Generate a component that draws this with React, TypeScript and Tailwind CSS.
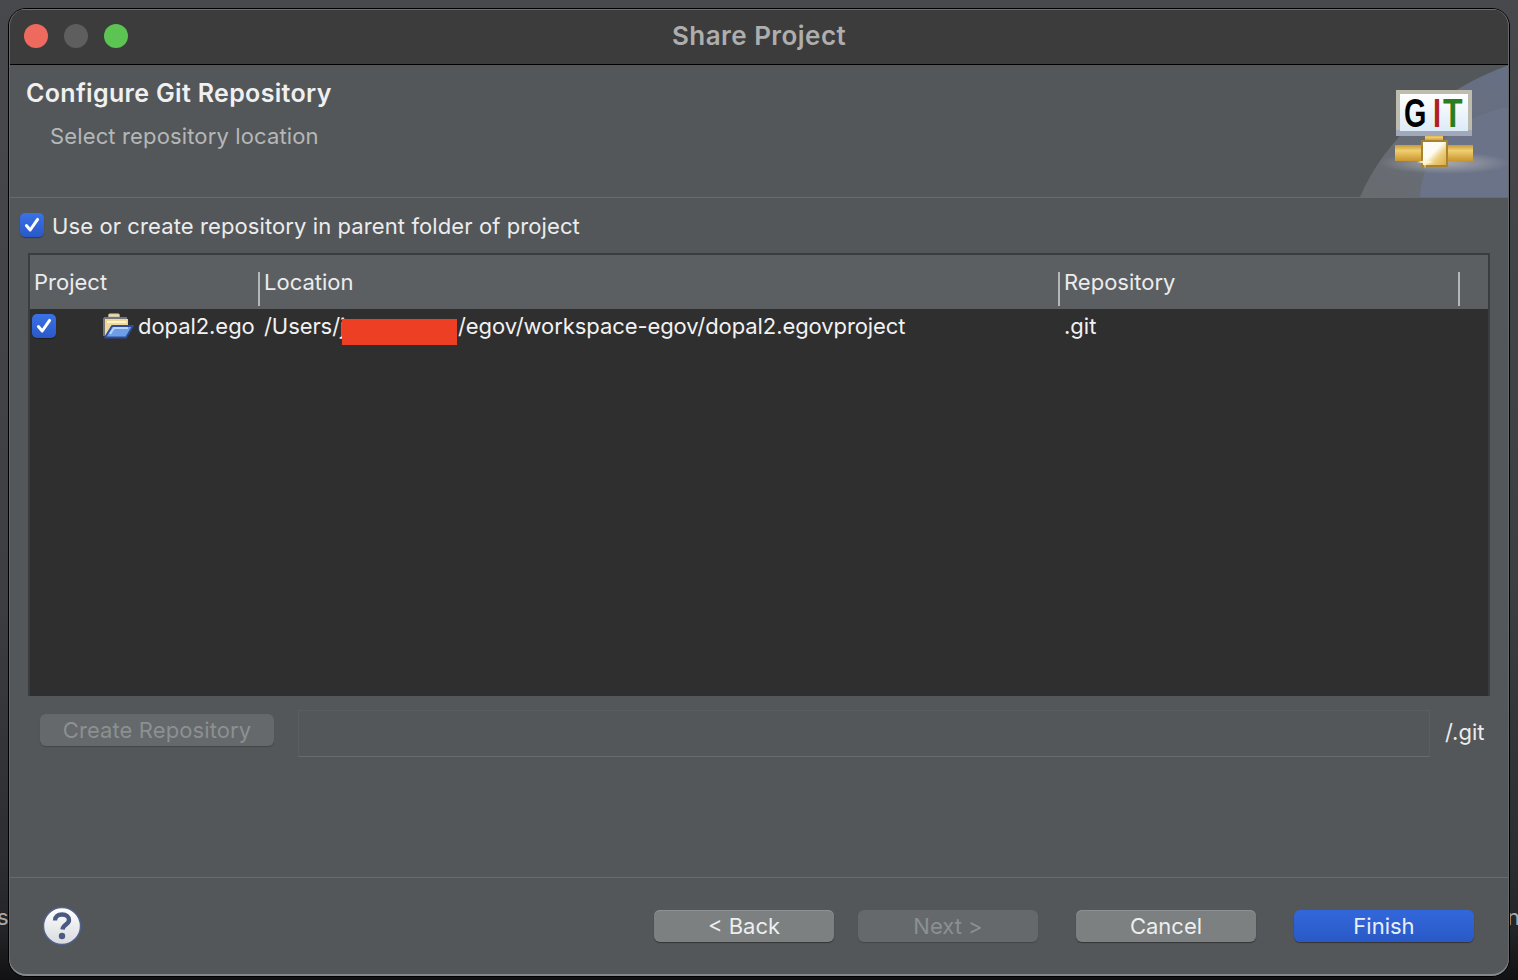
const sans = { fontFamily: "Inter, 'Noto Sans', sans-serif" }

function CheckBox() {
  return (
    <span className="flex h-[24px] w-[24px] shrink-0 items-center justify-center rounded-[5px] bg-[linear-gradient(#3a72e6,#2a58c8)] shadow-[0_1px_1px_rgba(0,0,0,0.35)]">
      <svg width="18" height="18" viewBox="0 0 18 18" fill="none">
        <path d="M3.4 9.6 L7.2 14 L14.6 3.4" stroke="white" strokeWidth="3" strokeLinecap="round" strokeLinejoin="round" />
      </svg>
    </span>
  )
}

function FolderIcon() {
  return (
    <svg width="32" height="26" viewBox="0 0 32 26" fill="none">
      <path d="M6.5 4 L6.5 2 Q6.5 0.8 8 0.8 L16 0.8 Q17.5 0.8 17.5 2 L17.5 4 Z" fill="#ecdcae" stroke="#a9a48e" strokeWidth="0.8" />
      <path d="M2 5 H25 M2 5 V23" stroke="#74757c" strokeWidth="2" />
      <rect x="3" y="6" width="23" height="17" fill="#eed99a" />
      <path d="M5 9 H24" stroke="#fff3c8" strokeWidth="2" />
      <path d="M3 24.5 L10 13 H31 L24 24.5 Z" fill="#6f9ee8" stroke="#2e4c98" strokeWidth="1.8" strokeLinejoin="round" />
      <path d="M8 21 L12 15 H26" stroke="#bcd4f8" strokeWidth="2" />
    </svg>
  )
}

function HelpIcon() {
  return (
    <svg width="40" height="40" viewBox="0 0 40 40" fill="none">
      <defs>
        <linearGradient id="helpFill" x1="0" y1="0" x2="0" y2="1">
          <stop offset="0" stopColor="#ffffff" />
          <stop offset="1" stopColor="#d9dade" />
        </linearGradient>
      </defs>
      <circle cx="20" cy="20" r="18.5" fill="url(#helpFill)" stroke="#4f6290" strokeWidth="1.4" />
      <path d="M13 14.5 C13 10.5 16 8.5 20 8.5 C24.5 8.5 27 11 27 14 C27 18.5 21 18.5 20.5 23.5" stroke="#4a5a82" strokeWidth="4.4" strokeLinecap="butt" />
      <circle cx="20" cy="30" r="3.2" fill="#4a5a82" />
    </svg>
  )
}

function GitBanner() {
  return (
    <svg className="absolute right-0 top-0" width="160" height="132" viewBox="0 0 160 132" fill="none">
      <defs>
        <linearGradient id="arcA" x1="0" y1="1" x2="1" y2="0">
          <stop offset="0" stopColor="#686b6e" />
          <stop offset="1" stopColor="#667086" />
        </linearGradient>
        <linearGradient id="gold" x1="0" y1="0" x2="0" y2="1">
          <stop offset="0" stopColor="#c79a38" />
          <stop offset="0.35" stopColor="#f0cf70" />
          <stop offset="1" stopColor="#c9962e" />
        </linearGradient>
        <linearGradient id="boxFill" x1="0" y1="0" x2="1" y2="1">
          <stop offset="0.45" stopColor="#fdfcf4" />
          <stop offset="0.65" stopColor="#eccf7c" />
          <stop offset="1" stopColor="#d8a840" />
        </linearGradient>
        <linearGradient id="label" x1="0" y1="0" x2="0" y2="1">
          <stop offset="0" stopColor="#ffffff" />
          <stop offset="1" stopColor="#dcebf8" />
        </linearGradient>
        <radialGradient id="glow">
          <stop offset="0" stopColor="#a9aaac" stopOpacity="0.95" />
          <stop offset="1" stopColor="#a9aaac" stopOpacity="0" />
        </radialGradient>
        <clipPath id="arcClip">
          <path d="M11 132 C35 75 90 25 160 0 V132 Z" />
        </clipPath>
      </defs>
      <path d="M11 132 C35 75 90 25 160 0 V132 Z" fill="url(#arcA)" />
      <path d="M71 132 C73 85 110 50 160 42 V132 Z" fill="#6b7389" />
      <ellipse cx="96" cy="98" rx="66" ry="11" fill="url(#glow)" clipPath="url(#arcClip)" />
      <rect x="47" y="25" width="76" height="46" fill="#bdbcae" />
      <rect x="47" y="65" width="76" height="6" fill="#a3a8b8" />
      <rect x="51" y="29" width="68" height="37" fill="url(#label)" />
      <text transform="translate(55 62) scale(0.72 1)" fontFamily="'Liberation Sans', sans-serif" fontWeight="700" fontSize="40" fill="#000000">G</text>
      <text transform="translate(84 62) scale(0.72 1)" fontFamily="'Liberation Sans', sans-serif" fontWeight="700" fontSize="40" fill="#b02020">I</text>
      <text transform="translate(94 62) scale(0.8 1)" fontFamily="'Liberation Sans', sans-serif" fontWeight="700" fontSize="40" fill="#2c7c20">T</text>
      <rect x="76" y="70" width="18" height="6" fill="url(#gold)" />
      <rect x="46" y="80" width="78" height="16" fill="url(#gold)" />
      <rect x="73" y="76" width="25" height="25" fill="url(#boxFill)" stroke="#a9822f" strokeWidth="2" />
      <path d="M76 90 L77 95.5 L85 97 L77 98.5 L76 104 L75 98.5 L68 97 L75 95.5 Z" fill="#fff4d2" opacity="0.85" />
    </svg>
  )
}

function Btn({ label, kind }: { label: string; kind: "normal" | "off" | "primary" }) {
  const look =
    kind === "primary"
      ? "bg-[linear-gradient(#3267dc,#2a59c6)] text-[#e8effc] shadow-[0_1px_1px_rgba(0,0,0,0.4)]"
      : kind === "normal"
        ? "bg-[#7c8081] text-[#eeeeee] shadow-[0_1px_1px_rgba(0,0,0,0.4),inset_0_1px_0_#8e9192]"
        : "bg-[#65696b] text-[#8c9091] shadow-[0_1px_1px_rgba(0,0,0,0.2)]"
  return (
    <button className={`flex h-[32px] w-[180px] items-center justify-center rounded-[6px] text-[22px] ${look}`}>{label}</button>
  )
}

export default function App() {
  return (
    <div
      className="relative h-[980px] w-[1518px] overflow-hidden bg-[linear-gradient(#47494c_0%,#3c3e41_60%,#2b2d30_88%,#232427_95%,#111113_100%)] pl-[8px] pt-[8px]"
      style={sans}
    >
      <span className="absolute left-[-3px] top-[901px] text-[22px] text-[#a8a8a8]">s</span>
      <span className="absolute left-[1507px] top-[901px] text-[22px] text-[#a8a8a8]">n.</span>

      <div className="relative flex h-[969px] w-[1502px] flex-col overflow-hidden rounded-[18px] border border-black bg-[#53575a] text-[#ececec]">
        {/* Title bar */}
        <div className="flex h-[56px] shrink-0 items-center border-b border-black bg-[#3c3c3c] pb-[1px] pl-[15px] shadow-[inset_0_1px_0_#6f6f6f]">
          <span className="h-[24px] w-[24px] rounded-full bg-[#ee6a5f]" />
          <span className="ml-[16px] h-[24px] w-[24px] rounded-full bg-[#5e5e5e]" />
          <span className="ml-[16px] h-[24px] w-[24px] rounded-full bg-[#5bc453]" />
          <span className="mb-[2px] ml-[544px] text-[26px] font-semibold tracking-[0.45px] text-[#aeaeae]">Share Project</span>
        </div>

        {/* Wizard header */}
        <div className="relative h-[133px] shrink-0 border-b border-[#686c6f] pl-[17px] pt-[10px]">
          <GitBanner />
          <div className="text-[25px] font-semibold leading-[36px] tracking-[0.33px] text-[#f0f0f0]">Configure Git Repository</div>
          <div className="ml-[24px] mt-[10px] text-[22px] leading-[30px] tracking-[0.14px] text-[#b5b7b8]">Select repository location</div>
        </div>

        {/* Parent folder option */}
        <div className="ml-[11px] mt-[15px] flex h-[24px] shrink-0 items-center gap-[8px]">
          <CheckBox />
          <span className="mt-[2px] text-[22px] leading-[24px] tracking-[0.1px]">Use or create repository in parent folder of project</span>
        </div>

        {/* Projects table */}
        <div className="ml-[19px] mt-[16px] flex h-[443px] w-[1462px] shrink-0 flex-col border-l-2 border-r-2 border-t-2 border-[#3a3d3f] bg-[#2f2f2f] text-[22px] leading-[24px]">
          <div className="flex h-[54px] shrink-0 bg-[#5b5f62]">
            <div className="w-[228px] pl-[4px] pt-[15px]">Project</div>
            <div className="mt-[17px] h-[34px] w-[2px] bg-[#b4b6b7]" />
            <div className="w-[798px] pl-[4px] pt-[15px]">Location</div>
            <div className="mt-[17px] h-[34px] w-[2px] bg-[#b4b6b7]" />
            <div className="w-[398px] pl-[4px] pt-[15px]">Repository</div>
            <div className="mt-[17px] h-[34px] w-[2px] bg-[#b4b6b7]" />
          </div>
          <div className="flex items-start pt-[5px] text-[#f2f2f2]">
            <div className="flex w-[230px] items-start pl-[2px]">
              <CheckBox />
              <span className="ml-[46px] mt-[-1px]"><FolderIcon /></span>
              <span className="ml-[4px] tracking-[-0.06px]">dopal2.ego</span>
            </div>
            <div className="flex w-[800px] items-start pl-[4px] tracking-[-0.08px]">
              <span className="w-[78px] shrink-0">/Users/j</span>
              <span className="mt-[5px] h-[26px] w-[115px] shrink-0 bg-[#ec3f24]" />
              <span className="ml-[1px]">/egov/workspace-egov/dopal2.egovproject</span>
            </div>
            <div className="pl-[4px]">.git</div>
          </div>
        </div>

        {/* Create repository row */}
        <div className="mt-[14px] flex h-[47px] shrink-0 items-start">
          <div className="ml-[31px] mt-[4px]">
            <button className="flex h-[32px] w-[234px] items-center justify-center rounded-[6px] bg-[#65696b] text-[22px] tracking-[0.1px] text-[#8c9091] shadow-[0_1px_1px_rgba(0,0,0,0.2)]">
              Create Repository
            </button>
          </div>
          <div className="ml-[24px] h-[47px] w-[1132px] border border-[#5a5e61] border-b-[#686c6f]" />
          <span className="ml-[15px] mt-[6px] text-[22px]">/.git</span>
        </div>

        {/* Footer */}
        <div className="mt-auto flex h-[99px] shrink-0 items-center border-t border-[#686c6f] pb-[2px] pl-[33px] pr-[35px]">
          <HelpIcon />
          <div className="ml-auto flex">
            <Btn label="< Back" kind="normal" />
            <div className="ml-[24px]"><Btn label="Next >" kind="off" /></div>
            <div className="ml-[38px]"><Btn label="Cancel" kind="normal" /></div>
            <div className="ml-[38px]"><Btn label="Finish" kind="primary" /></div>
          </div>
        </div>

        {/* Window edge highlight */}
        <div className="pointer-events-none absolute inset-0 rounded-[17px] shadow-[inset_0_-2px_0_#85888a,inset_1px_0_0_#66696c,inset_-1px_0_0_#66696c]" />
      </div>
    </div>
  )
}
